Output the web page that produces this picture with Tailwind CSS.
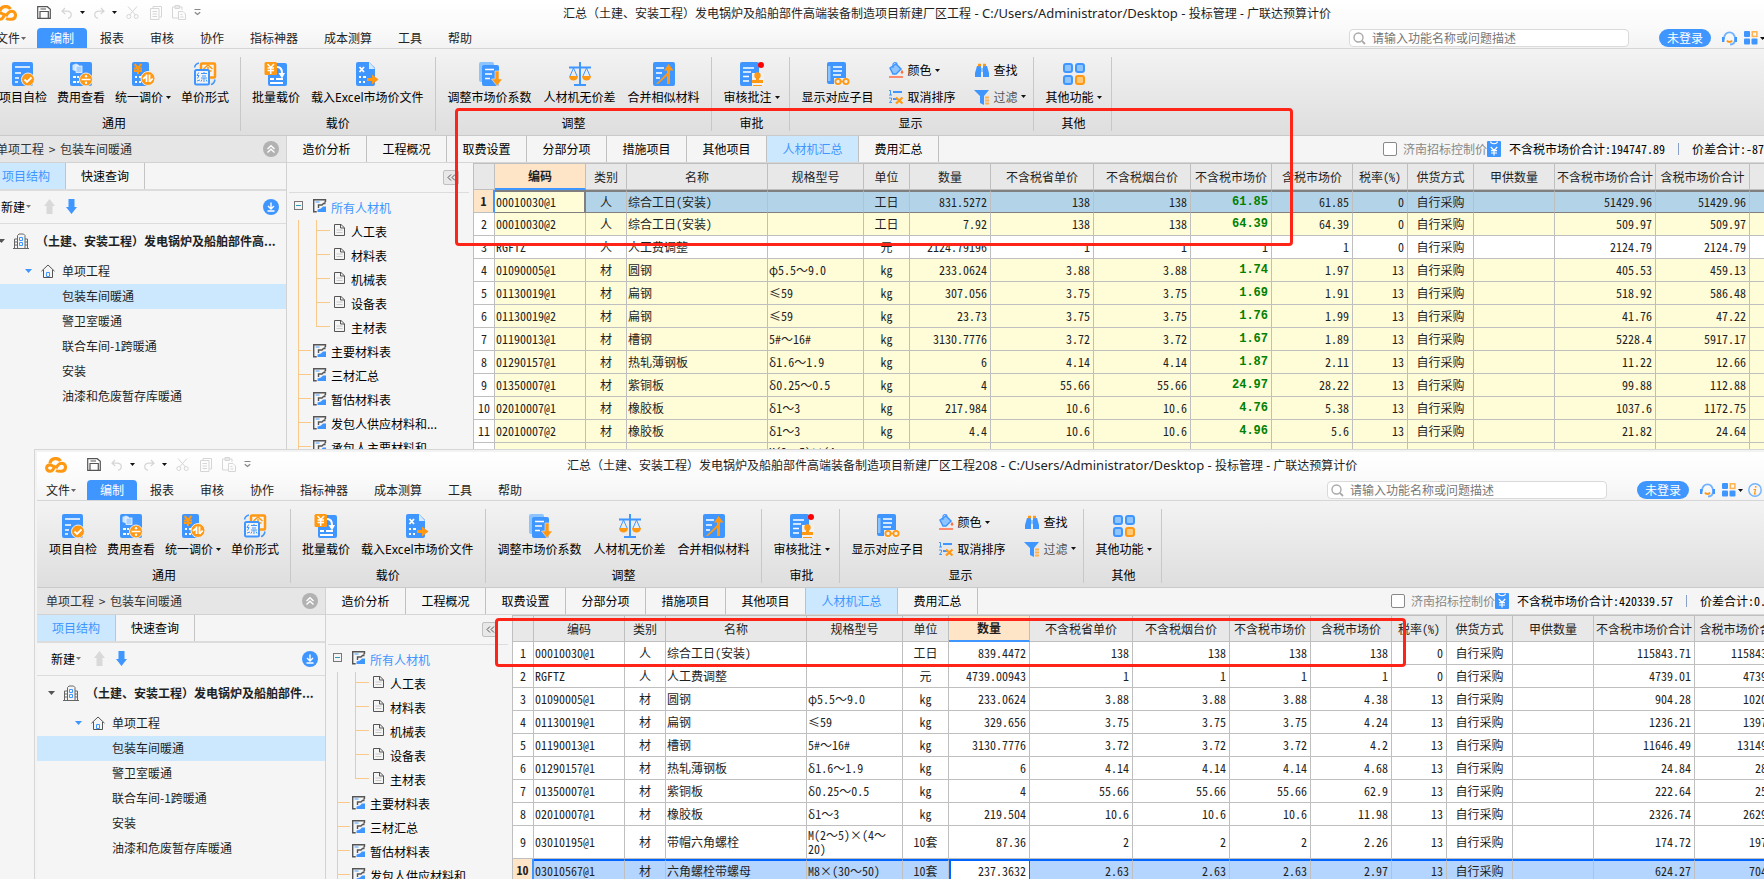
<!DOCTYPE html>
<html lang="zh-CN">
<head>
<meta charset="utf-8">
<title>广联达预算计价</title>
<script src="https://cdn.jsdelivr.net/npm/@tailwindcss/browser@4"></script>
</head>
<body class="relative h-screen overflow-hidden bg-[#f5f5f5] font-['Noto_Sans_CJK_SC',sans-serif] text-xs leading-4 text-[#1f1f1f]">
<main id="desktop"></main>
<script>
const B = '#4096ff', O = '#ff9812';
const svg = (w, h, body, cls = 'shrink-0') => `<svg class="${cls}" width="${w}" height="${h}" viewBox="0 0 ${w} ${h}" fill="none" aria-hidden="true">${body}</svg>`;
const caret = (c = '#111') => svg(5, 3, `<path d="M0 0h5L2.5 3z" fill="${c}"/>`);
const G = '#d6d6d6';
const icons = {
  logo: svg(22, 16, `<path d="M10.500 8.500 8 12.600Q6.800 14.300 5 14.200C.8 14 .5 8.800 4.200 8q2.300-.3 4.300 1.500" stroke="${O}" stroke-width="3"/><path d="M5 6.500C5.500 1 13 0 15.500 4" stroke="${O}" stroke-width="3.200"/><path d="M11 13.500q2 1 5.500.7c5.300-.2 5.300-7.600.5-7.900-3-.1-4.500 2-6 5" stroke="${O}" stroke-width="3"/>`),
  save: svg(14, 13, `<path d="M.7.7h9.600l3 2.600v9H.7zM3 12V5.500h8.300V12M3.500 3h5.500" stroke="#555" stroke-width="1.200"/>`),
  undo: svg(11, 12, `<path d="M4 1 1 4.300 4.300 7M1.300 4.200H6c5.500 0 5.500 6 1 7.200" stroke="${G}" stroke-width="1.200"/>`),
  redo: svg(11, 12, `<path d="m7 1 3 3.300L6.700 7M9.700 4.200H5c-5.500 0-5.500 6-1 7.200" stroke="${G}" stroke-width="1.200"/>`),
  cut: svg(13, 13, `<path d="m2 .5 7.500 8.500M11 .5 3.500 9" stroke="${G}"/><circle cx="2.800" cy="10.500" r="2" stroke="${G}"/><circle cx="10.200" cy="10.500" r="2" stroke="${G}"/>`),
  copy: svg(12, 14, `<path d="M3 2.500V.5h8.500V11H9.500M.5 2.500H9v11H.5zM2.500 5.500H7M2.500 8H7M2.500 10.500H7" stroke="${G}"/>`),
  paste: svg(14, 15, `<path d="M6 13H.5V2H10v3M3 3.500V.5h4.500v3zM6.500 6.500H11l2.500 2.500v5.500h-7zM8.500 9.500h2M8.500 12h3" stroke="${G}"/>`),
  more: svg(7, 7, `<path d="M.5.500h6" stroke="#888"/><path d="m.8 3.200 2.700 2.300 2.700-2.300" stroke="#888" stroke-width="1.300"/>`),
  check: svg(24, 24, `<rect x="1" width="21" height="24" rx="2" fill="${B}"/><path d="M4 5h15M4 11h6M4 16h4M4 20h3" stroke="#fff" stroke-width="1.600"/><circle cx="17" cy="17.500" r="6.500" fill="${O}" stroke="#eee"/><path d="m13.500 17.500 2.500 2.500 4.500-4.500" stroke="#fff" stroke-width="1.800"/>`),
  fee: svg(24, 24, `<rect x="1" width="22" height="24" rx="2" fill="${B}"/><path d="M3.500 3 7 1.500 10 3v5L6 9 3.500 8z" fill="#cfe5ff"/><rect x="7" y="4" width="6" height="6.500" fill="#a8d0ff" stroke="#fff" stroke-width=".7"/><path d="M4 15h3M4 20h3M8 15h2M8 20h2" stroke="#fff" stroke-width="2"/><circle cx="17" cy="17.500" r="6.500" fill="${O}" stroke="#eee"/><path d="M12.500 17.500h9" stroke="#fff" stroke-width="1.500"/><circle cx="17" cy="14.300" r="1.200" fill="#fff"/><circle cx="17" cy="20.700" r="1.200" fill="#fff"/>`),
  unify: svg(24, 24, `<rect x="1" width="17" height="24" rx="2" fill="${B}"/><path d="m3.500 2 3.500 4 3.500-4M3 6.500h8M3 9h8M7 6v6" stroke="${O}" stroke-width="2"/><path d="M4 15h2M4 20h2M8 15h2M8 20h2" stroke="#fff" stroke-width="2"/><circle cx="17" cy="16.500" r="7" fill="${O}" stroke="#eee"/><path d="M15.500 12.500V20M12 17l3.500-3M18.500 12.500V20M18.500 20l3.200-3.500" stroke="#fff" stroke-width="1.800"/>`),
  form: svg(24, 24, `<rect x="8" y="1.500" width="14" height="14" rx="1" fill="#f4f4f4" stroke="${O}" stroke-width="2.500"/><path d="m10.500 7 4.500-4 4.500 4M15 5v8M11.500 9h7" stroke="${O}" stroke-width="1.500"/><rect x="2" y="8" width="14" height="14.500" rx="1.500" fill="#f4f4f4" stroke="${B}" stroke-width="2"/><path d="M1.500 5.500C2 3 3.500 1.500 6 1M18 22.500c2-.5 3.500-2.500 4-5" stroke="${B}" stroke-width="1.500"/><path d="m5.800 10.500-1.800 3h2L4.500 16.500M4 19l3-1M8 11.500h6M11 10v1.500M9 14h4M8 16h6M11 16v4M9 17.500 8 19.500M13 17.500l1 2" stroke="${B}"/>`),
  batch: svg(24, 24, `<rect x="4" y="1" width="19" height="23" rx="2" fill="${B}"/><path d="M6 17h4M6 21h13M12 17h7" stroke="#fff" stroke-width="1.800"/><rect x=".5" width="12.500" height="13" rx="1.500" fill="${O}"/><path d="m3.500 2 3.200 3.500L10 2M3.500 6h6.500M3.500 8.500h6.500M6.700 5.500V12" stroke="#fff" stroke-width="1.500"/><path d="M13 5c4 0 5 3 5 6" stroke="#fff" stroke-width="2"/><path d="M14.500 11h6.500l-3 5.500z" fill="#fff"/>`),
  excel: svg(24, 24, `<path d="M3 0h11l6 6v16a2 2 0 0 1-2 2H3a2 2 0 0 1-2-2V2a2 2 0 0 1 2-2z" fill="${B}"/><path d="M14 0v7h6z" fill="#d6eaff"/><path d="m4.500 5 4.500 5M9 5l-4.500 5" stroke="#fff" stroke-width="1.800"/><path d="M4 15h2M4 20h2M8 15h3M8 20h2" stroke="#fff" stroke-width="2"/><path d="M12 16h5v-3.500l6.500 5L17 22.500V19h-5z" fill="${O}"/>`),
  adjust: svg(24, 24, `<rect x="1" width="15" height="20" rx="2" fill="#8cc4ff"/><rect x="4" y="3" width="17" height="21" rx="2" fill="${B}"/><path d="M7 7.500h9M7 12h7M7 16.500h5" stroke="#fff" stroke-width="1.600"/><path d="M17 9h4v8h3.500L19 24l-5.500-7H17z" fill="${O}" stroke="#eee" stroke-width=".6"/>`),
  scale: svg(24, 24, `<path d="M12 0v22M1 5.500h22M6 23h12" stroke="${B}" stroke-width="2"/><path d="M5.500 6 2 14M5.500 6 9 14M18.500 6 15 14M18.500 6l3.500 8" stroke="${B}"/><path d="M1 14h9c0 6-9 6-9 0zM14 14h9c0 6-9 6-9 0z" fill="${O}"/>`),
  merge: svg(24, 24, `<rect x="1" width="22" height="24" rx="2" fill="${B}"/><path d="M4 6h8M4 11h6M4 16h4" stroke="#fff" stroke-width="1.600"/><path d="m16.500 2 5 6.500H18V22h-3v-8L6 22H4l11-11V8.500h-3z" fill="${O}"/>`),
  review: svg(24, 24, `<rect width="19" height="24" rx="2" fill="${B}"/><path d="M3 6h11M3 10h8M3 14.500h6M3 19h6" stroke="#fff" stroke-width="1.600"/><path d="M12 11h12v13H12z" fill="#f1f1f1"/><circle cx="17.500" cy="13.500" r="3.200" fill="${O}"/><path d="M16 15h3v3h4v3H12v-3h4zM13 23h9v1h-9z" fill="${O}"/><circle cx="21" cy="3" r="3" fill="#f00"/>`),
  display: svg(24, 24, `<rect x="1" width="19" height="22" rx="2" fill="${B}"/><path d="M2 4h2.500v15H2z" fill="#8cc4ff"/><path d="M7 5h9M7 9h9M7 13h8" stroke="#fff" stroke-width="1.500"/><path d="M8 16h15v8H8z" fill="#eee"/><circle cx="12" cy="19.500" r="2.600" stroke="${O}" stroke-width="1.800"/><circle cx="20" cy="19.500" r="2.600" stroke="${O}" stroke-width="1.800"/><path d="M14.500 19.500h3" stroke="${O}" stroke-width="1.600"/>`),
  apps: svg(24, 24, `<rect x="2" y="2" width="8" height="8" rx="2" fill="#8fc5ff" stroke="${B}" stroke-width="2"/><rect x="14" y="2" width="8" height="8" rx="2" fill="#8fc5ff" stroke="${B}" stroke-width="2"/><rect x="2" y="14" width="8" height="8" rx="2" fill="#8fc5ff" stroke="${B}" stroke-width="2"/><rect x="14" y="14" width="8" height="8" rx="2" fill="#ffc97a" stroke="${O}" stroke-width="2"/>`),
  color: svg(16, 16, `<path d="m2 6 6-4 5 5-5 5H5z" fill="#8fc5ff" stroke="${B}" stroke-width="1.500"/><path d="M5 6V2.500C5 0 9 0 9 2.500" stroke="${B}" stroke-width="1.200"/><path d="M14 8.500 15 11h-2z" fill="#ff6a3c" stroke="#ff6a3c"/><path d="M1 15h14" stroke="#ff8060" stroke-width="1.800"/>`),
  sort: svg(16, 16, `<path d="M1 1.500h1.500V6M1 6h3M1 9h2.500v2L1.500 13.500H4" stroke="${B}"/><path d="M5 3h9M5 10h4" stroke="${B}" stroke-width="1.800"/><path d="m8 8.500 6.500 6M14.500 8.500 8 14.500" stroke="${O}" stroke-width="2.200"/>`),
  find: svg(16, 16, `<path d="M3 4h4v11H1V11zM9 4h4l2 7v4H9z" fill="${B}"/><path d="M4 3h3M9 3h3" stroke="${O}" stroke-width="2.500"/><path d="M7 6h2v4H7z" fill="#8fc5ff"/>`),
  filter: svg(16, 16, `<path d="M0 1h15L10 7v9l-4-2V7z" fill="${B}"/><path d="M11 8.500h4M11 11.500h4M11 14.500h4" stroke="#ffb24d" stroke-width="1.800"/>`),
  search: svg(13, 13, `<circle cx="5.500" cy="5.500" r="4.500" stroke="#aaa" stroke-width="1.400"/><path d="m9 9 3 3" stroke="#aaa" stroke-width="1.800"/>`),
  headset: svg(15, 15, `<path d="M2 8.500C1.500-1 13.500-1 13 8.500c0 3-2 5-5 5" stroke="#70b2ff" stroke-width="1.800"/><path d="M1.200 6v5M13.800 6v5" stroke="${B}" stroke-width="2.400"/><path d="M5 9.500c1 2 4 2 5 0" stroke="${O}" stroke-width="1.800"/>`),
  grid: svg(14, 14, `<rect width="6" height="6" rx="1" fill="${B}"/><rect y="7.500" width="6" height="6" rx="1" fill="${B}"/><rect x="7.500" y="7.500" width="6" height="6" rx="1" fill="${B}"/><rect x="8.300" y=".8" width="4.600" height="4.600" stroke="#ffb24d" stroke-width="1.500"/>`),
  info: svg(14, 14, `<circle cx="7" cy="7" r="6.200" stroke="#70b2ff" stroke-width="1.400"/><path d="M7.800 3.200 7.600 4.700" stroke="${O}" stroke-width="1.700"/><path d="M5.500 6.500h2L6.500 11h1.700" stroke="${O}" stroke-width="1.200"/>`),
  up2: svg(16, 16, `<circle cx="8" cy="8" r="8" fill="#b2b2b2"/><path d="m4.500 8 3.500-3.300L11.500 8M4.500 11.500 8 8.200l3.500 3.300" stroke="#fff" stroke-width="1.400"/>`),
  down: svg(16, 16, `<circle cx="8" cy="8" r="8" fill="${B}"/><path d="M8 3.500v6M5 7l3 3 3-3M4.500 12h7" stroke="#fff" stroke-width="1.400"/>`),
  arrowUp: svg(11, 15, `<path d="M5.500 0 11 7H8.500v8h-6V7H0z" fill="#d9d9d9"/>`),
  arrowDown: svg(11, 15, `<path d="M5.500 15 11 8H8.500V0h-6v8H0z" fill="${B}"/>`),
  building: svg(16, 16, `<path d="M4.500 15V2.500L6 1h4.500L12 2.500V15M4.500 6h-3v9M12 6h2.500v9M0 15.500h16M2 9h2M2 12h2M12 9h2M12 12h2" stroke="#666"/><path d="M6.500 4.500h3v3h-3zM6.500 9.500h3v3h-3z" stroke="${B}"/>`),
  home: svg(14, 14, `<path d="M.5 7.200 7 1l6.500 6.200M2.500 6v7.500h9V6" stroke="#555"/><path d="M5.500 8.500h3v4h-3z" stroke="${B}"/>`),
  sheet: svg(14, 14, `<path d="M11.500 3.500 12.500 2.500V.700H.7v12h3M12.500 4.500H10.500L9 6H5.500v3" stroke="#555" stroke-width="1.400"/><path d="M2.500 3h4" stroke="#9ccaff" stroke-width="2"/><path d="M4.500 13V10.500L8 9.500l2-2h3V13z" fill="${B}"/>`),
  doc: svg(11, 12, `<path d="M.5.500H7l3.500 3.300v7.700H.5zM6.500.5V4h4" stroke="#555"/><path d="M2.500 6h6M2.500 8.500h6" stroke="#c8c8c8"/>`),
  minus: svg(9, 9, `<rect x=".5" y=".5" width="8" height="8" stroke="#777"/><path d="M2 4.500h5" stroke="#2b9bb8"/>`),
  yen: svg(14, 16, `<rect width="14" height="16" rx="1" fill="${B}"/><path d="M3.500.5C4 3.500 10 3.500 10.500.5M3.800 6 7 9.500 10.200 6M4 9.700h6M4 12h6M7 9.500V14.500" stroke="#fff" stroke-width="1.200"/>`),
};

const big = (icon, label, drop) => `<button class="flex flex-col items-center gap-[3px]">${icons[icon]}<span class="flex items-center gap-[3px] whitespace-nowrap leading-4 text-black">${label}${drop ? caret() : ''}</span></button>`;
const small = (icon, label, drop, cls = 'text-black') => `<button class="flex items-center gap-1 whitespace-nowrap ${cls}">${icons[icon]}<span class="flex items-center gap-[3px]">${label}${drop ? caret() : ''}</span></button>`;
const group = (title, body, cls) => `<section class="flex shrink-0 flex-col justify-between border-r border-[#c8c8c8] ${cls}"><div class="flex pt-[5px]">${body}</div><h2 class="text-center text-black">${title}</h2></section>`;

const ribbon = `<div class="flex h-[87px] border-b border-[#cacaca] bg-linear-to-b from-[#f3f3f3] to-[#dedede] pt-2 pb-1">
${group('通用', `<div class="flex gap-[10px]">${big('check', '项目自检')}${big('fee', '费用查看')}${big('unify', '统一调价', 1)}${big('form', '单价形式')}</div>`, 'pl-3 pr-[11px]')}
${group('载价', `<div class="flex gap-[11px]">${big('batch', '批量载价')}${big('excel', '<span>载入<span class="font-[\'Noto_Sans\']">Excel</span>市场价文件</span>')}</div>`, 'px-[11px]')}
${group('调整', `<div class="flex gap-3">${big('adjust', '调整市场价系数')}${big('scale', '人材机无价差')}${big('merge', '合并相似材料')}</div>`, 'pl-3 pr-[11px]')}
${group('审批', big('review', '审核批注', 1), 'pl-3 pr-[9px]')}
${group('显示', `<div class="flex gap-[14px]">${big('display', '显示对应子目')}<div class="grid grid-cols-[86px_46px] gap-y-[10px]">${small('color', '颜色', 1)}${small('find', '查找')}${small('sort', '取消排序')}${small('filter', '过滤', 1, 'text-[#555]')}</div></div>`, 'pl-3 pr-[13px]')}
${group('其他', big('apps', '其他功能', 1), 'pl-3 pr-[9px]')}
</div>`;

const menuItem = t => `<a href="#" class="px-[13px]">${t}</a>`;
const titleBar = w => `<header class="relative flex h-7 items-center bg-linear-to-b from-white to-[#fafafa] pb-[3px] pl-2">
<div class="absolute inset-x-0 top-[5px] ${w.titlePad} whitespace-nowrap">汇总（土建、安装工程）发电锅炉及船舶部件高端装备制造项目新建厂区工程<span class="font-['Noto_Sans'] text-[13px]">${w.suffix} - C:/Users/Administrator/Desktop - </span>投标管理<span class="font-['Noto_Sans']"> - </span>广联达预算计价</div>
${icons.logo}
<div class="ml-5 flex items-center">
<button aria-label="保存">${icons.save}</button>
<button aria-label="撤销" class="ml-[10px] flex items-center gap-2">${icons.undo}${caret()}</button>
<button aria-label="恢复" class="ml-[9px] flex items-center gap-[7px]">${icons.redo}${caret()}</button>
<button aria-label="剪切" class="ml-[9px]">${icons.cut}</button>
<button aria-label="复制" class="ml-[11px]">${icons.copy}</button>
<button aria-label="粘贴" class="ml-[10px]">${icons.paste}</button>
<button aria-label="更多" class="ml-2">${icons.more}</button>
</div></header>
<nav class="flex h-[21px] items-center border-b border-[#d6d6d6] bg-linear-to-b from-[#fafafa] to-[#f3f3f3] leading-5 text-[#222]">
<a href="#" class="flex w-[50px] items-center gap-px pl-[9px]">文件${caret('#666')}</a>
<a href="#" class="h-5 rounded-t bg-[#4096ff] px-[13px] text-white">编制</a>
${['报表', '审核', '协作', '指标神器', '成本测算', '工具', '帮助'].map(menuItem).join('')}
<div class="ml-auto flex items-center">
<label class="flex h-[18px] w-[280px] items-center gap-[6px] rounded-sm border border-[#dadada] bg-white pl-[3px]">${icons.search}<input aria-label="搜索" placeholder="请输入功能名称或问题描述" class="w-full bg-transparent leading-4 outline-none placeholder:text-[#777]"></label>
<button class="ml-[30px] h-[18px] w-[52px] rounded-full bg-[#4096ff] leading-[18px] text-white">未登录</button>
<button aria-label="客服" class="ml-[11px]">${icons.headset}</button>
<button aria-label="应用" class="ml-[7px] flex items-center gap-[2px]">${icons.grid}${caret()}</button>
<button aria-label="信息" class="mr-[6px] ml-[5px] flex items-center gap-[2px]">${icons.info}</button>
</div></nav>`;

const leaf = (t, on) => `<li><a href="#" class="flex h-[25px] items-center pb-px pl-[75px] ${on ? 'bg-[#cce8ff]' : ''}">${t}</a></li>`;
const leftPanel = w => `<aside class="${w.leftWidth} shrink-0 border-r border-[#d2d2d2]">
<div class="flex h-[27px] items-center justify-between border-b border-[#d2d2d2] bg-[#e6e6e6] pr-[7px] pl-[9px] text-[#333]"><span>单项工程 <span class="px-[2px]">&gt;</span> 包装车间暖通</span><button aria-label="收起">${icons.up2}</button></div>
<div class="flex h-7 border-b-2 border-[#dcdcdc] text-black"><button class="w-[79px] border-r border-[#c4c4c4] bg-[#cce8ff] text-[#4096ff]">项目结构</button><button class="w-[79px] border-r border-[#c4c4c4]">快速查询</button></div>
<div class="flex h-[33px] items-center border-b border-[#dcdcdc] pr-[7px] pb-px pl-[14px] text-black"><button class="flex items-center gap-px">新建${caret('#777')}</button><button aria-label="上移" class="ml-[13px]">${icons.arrowUp}</button><button aria-label="下移" class="ml-[11px]">${icons.arrowDown}</button><button aria-label="下载" class="ml-auto">${icons.down}</button></div>
<ul>
<li class="flex h-[34px] items-center pl-[11px] font-bold whitespace-nowrap">${svg(7, 4, '<path d="M0 0h7L3.500 4z" fill="#555"/>')}<span class="ml-2">${icons.building}</span><span class="ml-[7px]">${w.project}</span></li>
<li class="flex h-[26px] items-center pl-[38px]">${svg(7, 4, `<path d="M0 0h7L3.500 4z" fill="${B}"/>`)}<span class="ml-[9px]">${icons.home}</span><span class="ml-[7px]">单项工程</span></li>
${leaf('包装车间暖通', 1)}${['警卫室暖通', '联合车间-1跨暖通', '安装', '油漆和危废暂存库暖通'].map(t => leaf(t)).join('')}
</ul></aside>`;

const line = 'border-[#f9c98a]';
const sub = (t, last) => `<li class="flex h-6 text-black"><span class="ml-[11px] w-[18px] border-l ${line}"></span><span class="flex w-[14px] flex-col"><i class="h-[11px] border-b border-l ${line}"></i><i class="flex-1 ${last ? '' : 'border-l'} ${line}"></i></span><span class="mt-1 ml-1">${icons.doc}</span><span class="mt-1 ml-[6px]">${t}</span></li>`;
const branch = t => `<li class="flex h-6 text-black"><span class="ml-[11px] flex w-[13px] flex-col"><i class="h-[11px] border-b border-l ${line}"></i><i class="flex-1 border-l ${line}"></i></span><span class="mt-1 ml-[2px]">${icons.sheet}</span><span class="mt-1 ml-1 whitespace-nowrap">${t}</span></li>`;
const midPanel = `<aside class="w-[186px] shrink-0 overflow-hidden">
<div class="mr-1 ml-[2px] flex h-[30px] justify-end border-b border-[#dcdcdc] pt-[7px] pr-[10px]"><button aria-label="折叠" class="grid h-[15px] w-4 place-items-center rounded-xs border border-[#c0c0c0] bg-[#e8e8e8]">${svg(9, 7, '<path d="M4 .500 1 3.500l3 3M8 .500 5 3.500l3 3" stroke="#555"/>')}</button></div>
<ul class="pt-[3px]">
<li class="flex h-6 text-[#4096ff]"><span class="mt-[5px] ml-[7px]">${icons.minus}</span><span class="mt-[3px] ml-[10px]">${icons.sheet}</span><span class="mt-1 ml-1">所有人材机</span></li>
${sub('人工表')}${sub('材料表')}${sub('机械表')}${sub('设备表')}${sub('主材表', 1)}
${['主要材料表', '三材汇总', '暂估材料表', '发包人供应材料和...', '承包人主要材料和...'].map(branch).join('')}
</ul></aside>`;

const heads = ['', '编码', '类别', '名称', '规格型号', '单位', '数量', '不含税省单价', '不含税烟台价', '不含税市场价', '含税市场价', '税率(%)', '供货方式', '甲供数量', '不含税市场价合计', '含税市场价合计', ''];
const widths = [21, 91, 41, 141, 96, 46, 81, 103, 97, 81, 81, 55, 66, 81, 101, 94];
const align = ['text-center', 'pl-px', 'text-center', 'pl-px', 'pl-px leading-[14px]', 'text-center', 'pr-[3px] text-right', 'pr-[3px] text-right', 'pr-[3px] text-right', 'pr-[3px] text-right', 'pr-[3px] text-right', 'pr-[3px] text-right', 'text-center', '', 'pr-[3px] text-right', 'pr-[3px] text-right', ''];
const cell = (w, r, i, v) => {
  const sel = r === w.selRow;
  let c = align[i];
  if (i === 0) c += sel ? ' bg-[#ffe5c8] font-bold border-r-2 border-r-[#4096ff]' : ' bg-white';
  else if (sel) {
    c += ' border-y-2 ' + w.selLine;
    if (i === w.selCol) c += w.selCell; else c += w.selBg;
  } else c += w.tint && r !== 2 ? ' bg-[#fffcd8]' : ' bg-white';
  if (w.tint && i === 9 && r !== 2) c += ' font-["Liberation_Mono"] font-bold text-[#008000]';
  else c += ' pb-px';
  return `<td class='h-[23px] overflow-hidden border-r border-b border-[#bfbfbf] ${c}'>${v ?? ''}</td>`;
};
const table = w => `<div class="min-w-0 flex-1 overflow-hidden border-t border-[#bfbfbf]"><table class="w-full table-fixed border-separate border-spacing-0 border-l border-[#bfbfbf] font-['Noto_Sans_Mono_CJK_SC','Noto_Sans_CJK_SC',monospace] leading-4">
<colgroup>${widths.map(x => `<col style="width:${x}px">`).join('')}<col></colgroup>
<thead><tr>${heads.map((h, i) => `<th scope="col" class="h-[26px] border-r border-[#bfbfbf] whitespace-nowrap ${i === w.selCol ? 'border-b-2 border-b-[#4096ff] bg-[#ffe5c8] font-bold' : 'border-b bg-[#e8e8e8] font-normal'}">${h}</th>`).join('')}</tr></thead>
<tbody>${w.rows.map((row, r) => { const v = row.split('|'); return `<tr class="${v[4].includes('<br>') ? 'h-[33px]' : 'h-[23px]'}">${heads.map((_, i) => cell(w, r, i, i === 0 ? r + 1 : v[i])).join('')}</tr>`; }).join('')}</tbody></table></div>`;

const tab = t => `<button class="w-20 shrink-0 border-r border-[#c0c0c0]">${t}</button>`;
const strip = w => `<div class="flex h-[27px] items-stretch border-b border-[#d6d6d6] text-black">${['造价分析', '工程概况', '取费设置', '分部分项', '措施项目', '其他项目'].map(tab).join('')}<button class="w-[92px] shrink-0 border-r border-[#c0c0c0] bg-[#cce8ff] text-[#4096ff]">人材机汇总</button>${tab('费用汇总')}
<div class="ml-auto flex items-center whitespace-nowrap ${w.stripPad}"><label class="flex items-center gap-[6px] text-[#888]"><input type="checkbox" class="size-[14px] appearance-none rounded-xs border border-[#888] bg-white">济南招标控制价</label>${icons.yen}<span class="ml-2 font-['Noto_Sans_Mono_CJK_SC','Noto_Sans_CJK_SC',monospace]">不含税市场价合计:${w.total}</span><span class="mx-[13px] h-3 w-px bg-[#8aa0c8]"></span><span class="font-['Noto_Sans_Mono_CJK_SC','Noto_Sans_CJK_SC',monospace]">价差合计:${w.diff}</span></div></div>`;

const appWindow = w => `<div class="flex h-full flex-col bg-[#f5f5f5]">${titleBar(w)}${ribbon}<div class="flex min-h-0 flex-1">${leftPanel(w)}<div class="flex min-w-0 flex-1 flex-col">${strip(w)}<div class="flex min-h-0 flex-1">${midPanel}${table(w)}</div></div></div></div>`;

const first = {
  titlePad: 'pl-[576px]', suffix: '', leftWidth: 'w-[300px]', project: '（土建、安装工程）发电锅炉及船舶部件高...',
  stripPad: 'pr-[26px]', total: '194747.89', diff: '-87', tint: true, selRow: 0, selCol: 1,
  selLine: 'border-y-[#808080]', selCell: ' bg-[#fffcd8] border-r-2 border-r-[#808080]', selBg: ' bg-[#b3d4e8]',
  rows: [
    '|00010030@1|人|综合工日(安装)||工日|831.5272|138|138|61.85|61.85|0|自行采购||51429.96|51429.96',
    '|00010030@2|人|综合工日(安装)||工日|7.92|138|138|64.39|64.39|0|自行采购||509.97|509.97',
    '|RGFTZ|人|人工费调整||元|2124.79196|1|1|1|1|0|自行采购||2124.79|2124.79',
    '|01090005@1|材|圆钢|φ5.5～9.0|kg|233.0624|3.88|3.88|1.74|1.97|13|自行采购||405.53|459.13',
    '|01130019@1|材|扁钢|≤59|kg|307.056|3.75|3.75|1.69|1.91|13|自行采购||518.92|586.48',
    '|01130019@2|材|扁钢|≤59|kg|23.73|3.75|3.75|1.76|1.99|13|自行采购||41.76|47.22',
    '|01190013@1|材|槽钢|5#～16#|kg|3130.7776|3.72|3.72|1.67|1.89|13|自行采购||5228.4|5917.17',
    '|01290157@1|材|热轧薄钢板|δ1.6～1.9|kg|6|4.14|4.14|1.87|2.11|13|自行采购||11.22|12.66',
    '|01350007@1|材|紫铜板|δ0.25～0.5|kg|4|55.66|55.66|24.97|28.22|13|自行采购||99.88|112.88',
    '|02010007@1|材|橡胶板|δ1～3|kg|217.984|10.6|10.6|4.76|5.38|13|自行采购||1037.6|1172.75',
    '|02010007@2|材|橡胶板|δ1～3|kg|4.4|10.6|10.6|4.96|5.6|13|自行采购||21.82|24.64',
    '||||M(2～5)×(4～<br>20)|||||||||||',
  ],
};
const second = {
  titlePad: 'pl-[530px]', suffix: '208', leftWidth: 'w-[289px]', project: '（土建、安装工程）发电锅炉及船舶部件...',
  stripPad: 'pr-[2px]', total: '420339.57', diff: '0.', tint: false, selRow: 9, selCol: 6,
  selLine: 'border-y-[#0064ff]', selCell: ' bg-white border-x-2 border-x-[#0064ff]', selBg: ' bg-[#b3d5ff]',
  rows: [
    '|00010030@1|人|综合工日(安装)||工日|839.4472|138|138|138|138|0|自行采购||115843.71|115843.71',
    '|RGFTZ|人|人工费调整||元|4739.00943|1|1|1|1|0|自行采购||4739.01|4739.01',
    '|01090005@1|材|圆钢|φ5.5～9.0|kg|233.0624|3.88|3.88|3.88|4.38|13|自行采购||904.28|1020.81',
    '|01130019@1|材|扁钢|≤59|kg|329.656|3.75|3.75|3.75|4.24|13|自行采购||1236.21|1397.74',
    '|01190013@1|材|槽钢|5#～16#|kg|3130.7776|3.72|3.72|3.72|4.2|13|自行采购||11646.49|13149.27',
    '|01290157@1|材|热轧薄钢板|δ1.6～1.9|kg|6|4.14|4.14|4.14|4.68|13|自行采购||24.84|28.08',
    '|01350007@1|材|紫铜板|δ0.25～0.5|kg|4|55.66|55.66|55.66|62.9|13|自行采购||222.64|251.6',
    '|02010007@1|材|橡胶板|δ1～3|kg|219.504|10.6|10.6|10.6|11.98|13|自行采购||2326.74|2629.66',
    '|03010195@1|材|带帽六角螺栓|M(2～5)×(4～<br>20)|10套|87.36|2|2|2|2.26|13|自行采购||174.72|197.43',
    '|03010567@1|材|六角螺栓带螺母|M8×(30～50)|10套|237.3632|2.63|2.63|2.63|2.97|13|自行采购||624.27|704.97',
  ],
};
document.getElementById('desktop').innerHTML = `
<div class="absolute inset-y-0 -right-[26px] -left-[13px] overflow-hidden">${appWindow(first)}</div>
<div class="absolute top-[108px] left-[455px] h-[138px] w-[838px] rounded border-3 border-[#ff2418]"></div>
<div class="absolute top-[449px] -right-1 bottom-0 left-[34px] overflow-hidden border-t border-l border-[#d6d6d6] bg-[#f3f3f3] pt-[2px] pl-[2px]">${appWindow(second)}</div>
<div class="absolute top-[618px] left-[495px] h-[49px] w-[911px] rounded border-3 border-[#ff2418]"></div>`;
</script>
</body>
</html>
